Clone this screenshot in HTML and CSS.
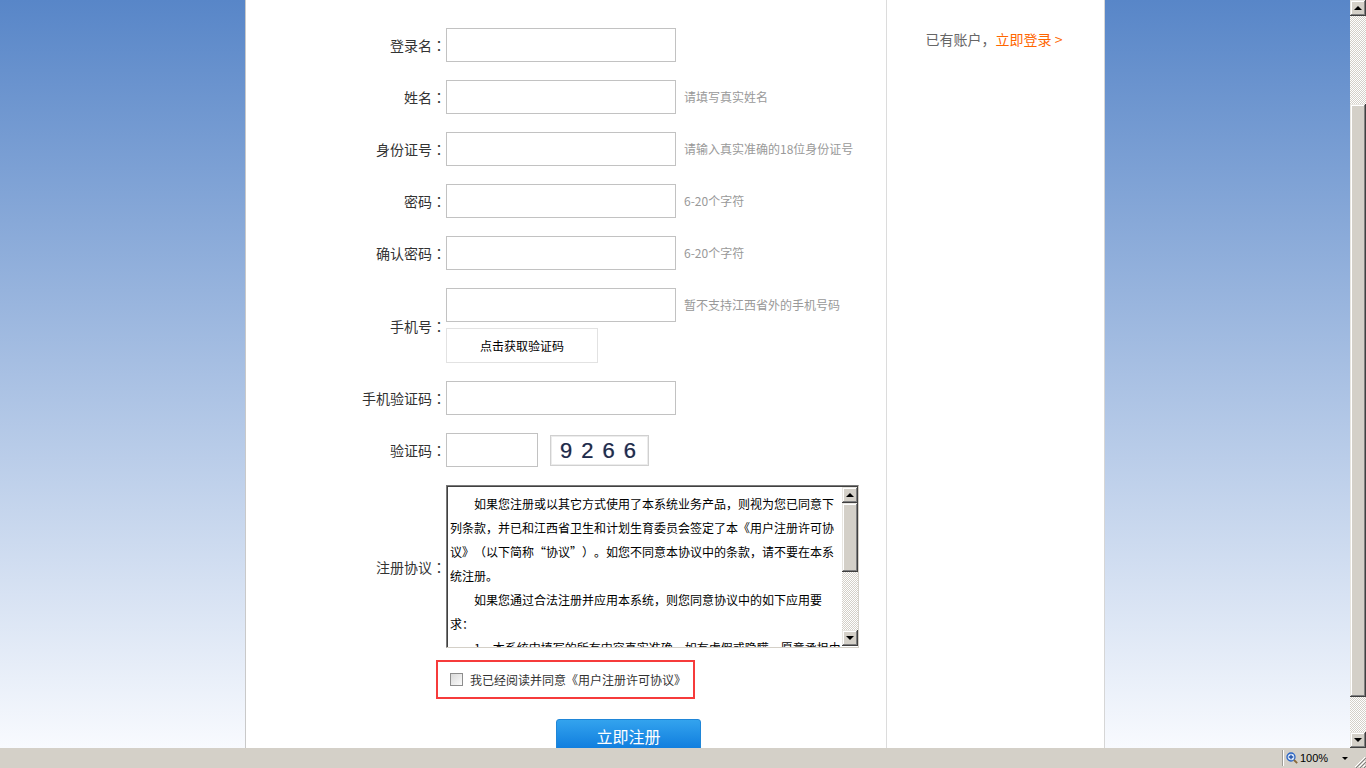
FILE: index.html
```html
<!DOCTYPE html>
<html lang="zh-CN">
<head>
<meta charset="utf-8">
<title>用户注册</title>
<link rel="stylesheet" href="styles.css">
</head>
<body>
<div class="screen">
  <div class="browser">
    <div class="viewport">
      <div class="panel">
        <div class="main">
          <form class="form">
            <div class="row">
              <label class="lbl">登录名<span class="colon" lang="zh-TW">：</span></label>
              <div class="field"><input class="ipt" type="text"></div>
            </div>
            <div class="row">
              <label class="lbl">姓名<span class="colon" lang="zh-TW">：</span></label>
              <div class="field"><input class="ipt" type="text"><span class="hint">请填写真实姓名</span></div>
            </div>
            <div class="row">
              <label class="lbl">身份证号<span class="colon" lang="zh-TW">：</span></label>
              <div class="field"><input class="ipt" type="text"><span class="hint">请输入真实准确的18位身份证号</span></div>
            </div>
            <div class="row">
              <label class="lbl">密码<span class="colon" lang="zh-TW">：</span></label>
              <div class="field"><input class="ipt" type="password"><span class="hint">6-20个字符</span></div>
            </div>
            <div class="row">
              <label class="lbl">确认密码<span class="colon" lang="zh-TW">：</span></label>
              <div class="field"><input class="ipt" type="password"><span class="hint">6-20个字符</span></div>
            </div>
            <div class="row">
              <label class="lbl">手机号<span class="colon" lang="zh-TW">：</span></label>
              <div class="field-col">
                <div class="field"><input class="ipt" type="text"><span class="hint">暂不支持江西省外的手机号码</span></div>
                <button type="button" class="sms-btn">点击获取验证码</button>
              </div>
            </div>
            <div class="row">
              <label class="lbl">手机验证码<span class="colon" lang="zh-TW">：</span></label>
              <div class="field"><input class="ipt" type="text"></div>
            </div>
            <div class="row">
              <label class="lbl">验证码<span class="colon" lang="zh-TW">：</span></label>
              <div class="field"><input class="ipt ipt-short" type="text"><span class="captcha">9266</span></div>
            </div>
            <div class="row">
              <label class="lbl">注册协议<span class="colon" lang="zh-TW">：</span></label>
              <div class="agreement">
                <div class="agreement-text">
                  <p>如果您注册或以其它方式使用了本系统业务产品，则视为您已同意下列条款，并已和江西省卫生和计划生育委员会签定了本《用户注册许可协议》（以下简称“协议”）。如您不同意本协议中的条款，请不要在本系统注册。</p>
                  <p>如果您通过合法注册并应用本系统，则您同意协议中的如下应用要求：</p>
                  <p>1、本系统中填写的所有内容真实准确，如有虚假或隐瞒，愿意承担由此产生的一切法律责任。</p>
                </div>
                <div class="sb sb-small">
                  <span class="sb-btn"><i class="tri-up"></i></span>
                  <span class="sb-thumb sb-thumb-small"></span>
                  <span class="sb-track"></span>
                  <span class="sb-btn"><i class="tri-down"></i></span>
                </div>
              </div>
            </div>
            <div class="agree-row">
              <label class="agree-box"><span class="chk"></span><span class="agree-text">我已经阅读并同意《用户注册许可协议》</span></label>
            </div>
            <div class="submit-row">
              <button type="button" class="submit">立即注册</button>
            </div>
          </form>
        </div>
        <aside class="side">
          <span class="muted">已有账户，</span><a class="login" href="#">立即登录 &gt;</a>
        </aside>
      </div>
    </div>
    <div class="sb sb-page">
      <span class="sb-btn"><i class="tri-up"></i></span>
      <span class="sb-track sb-track-top"></span>
      <span class="sb-thumb sb-thumb-page"></span>
      <span class="sb-track"></span>
      <span class="sb-btn"><i class="tri-down"></i></span>
    </div>
  </div>
  <div class="status">
    <div class="status-spacer"></div>
    <div class="zoom-pane">
      <svg class="zoom-icon" width="12" height="12" viewBox="0 0 12 12">
        <circle cx="5" cy="5" r="4" fill="#dbe9fb" stroke="#2a64c4" stroke-width="1.3"/>
        <path d="M5 2.8v4.4M2.8 5h4.4" stroke="#1f4fa8" stroke-width="1.3"/>
        <path d="M8 8l3.2 3.2" stroke="#8a6a3a" stroke-width="1.8"/>
      </svg>
      <span class="zoom-text">100%</span>
      <i class="tri-down tri-small"></i>
    </div>
    <div class="grip">
      <svg width="14" height="14" viewBox="0 0 14 14">
        <path d="M13 3L3 13M13 7L7 13M13 11L11 13" stroke="#fff" stroke-width="1"/>
        <path d="M14 4L4 14M14 8L8 14M14 12L12 14" stroke="#808080" stroke-width="1"/>
      </svg>
    </div>
  </div>
</div>
</body>
</html>
```

FILE: styles.css
```css
* { box-sizing: border-box; }
html, body { margin: 0; padding: 0; }
body {
  width: 1366px;
  height: 768px;
  overflow: hidden;
  font-family: "Noto Sans CJK SC", "Liberation Sans", sans-serif;
  color: #333;
  text-spacing-trim: space-all;
}
.screen { display: flex; flex-direction: column; width: 1366px; height: 768px; }
.browser { display: flex; height: 748px; }
.viewport {
  flex: 1;
  height: 748px;
  overflow: hidden;
  background: linear-gradient(to bottom, #5886c8 0%, #f8fafe 100%);
}
.panel {
  display: flex;
  width: 860px;
  height: 748px;
  margin-left: 245px;
  background: #fff;
  border-left: 1px solid #c9c9c9;
  border-right: 1px solid #d6d6d6;
}
.main { width: 641px; border-right: 1px solid #dcdcdc; }
.side {
  flex: 1;
  padding-top: 29px;
  padding-right: 3px;
  text-align: center;
  font-size: 14px;
  line-height: 20px;
}
.muted { color: #666; }
.login { color: #ff6600; text-decoration: none; }

.form { display: flex; flex-direction: column; gap: 18px; padding-top: 28px; margin: 0; }
.row { display: flex; align-items: center; }
.lbl {
  width: 200px;
  flex: none;
  text-align: right;
  font-size: 14px;
  line-height: 20px;
  color: #333;
}
.colon { font-family: "Noto Sans CJK TC", sans-serif; }
.field { display: flex; align-items: center; }
.field-col { display: flex; flex-direction: column; align-items: flex-start; }
.ipt {
  width: 230px;
  height: 34px;
  border: 1px solid #c2c2c2;
  margin: 0;
  padding: 0 6px;
  font-size: 14px;
  background: #fff;
  outline: none;
}
.ipt-short { width: 92px; }
.hint {
  margin-left: 8px;
  font-size: 12px;
  line-height: 16px;
  color: #999;
}
.sms-btn {
  margin-top: 6px;
  width: 152px;
  height: 35px;
  border: 1px solid #e2e2e2;
  background: #fff;
  font-family: "Noto Sans CJK SC", sans-serif;
  font-size: 12px;
  color: #000;
  padding: 0;
}
.captcha {
  margin-left: 12px;
  width: 99px;
  height: 31px;
  border: 1px solid #d0d0d0;
  box-shadow: inset 0 0 0 1px #ececec;
  font-family: "Liberation Sans", sans-serif;
  font-size: 22px;
  line-height: 29px;
  letter-spacing: 9px;
  padding-left: 9px;
  color: #1b2a4e;
  text-shadow: 0.6px 0 0 rgba(220, 140, 40, 0.45), -0.6px 0 0 rgba(40, 120, 220, 0.45);
}

.agreement {
  display: flex;
  width: 413px;
  height: 163px;
  border-style: solid;
  border-width: 1px;
  border-color: #7a7a7a #d4d0c8 #d4d0c8 #7a7a7a;
  box-shadow: inset 1px 1px 0 #404040;
  background: #fff;
}
.agreement-text {
  flex: 1;
  overflow: hidden;
  padding: 6px 0 0 3px;
  font-size: 12px;
  line-height: 24px;
  color: #000;
  text-spacing-trim: space-all;
}
.agreement-text p { margin: 0; text-indent: 2em; }

.sb { display: flex; flex-direction: column; width: 16px; flex: none; }
.sb-small { margin: 1px 0 1px 0; }
.sb-page { height: 748px; }
.sb-btn {
  height: 16px;
  flex: none;
  background: #d4d0c8;
  box-shadow: inset -1px -1px 0 #404040, inset 1px 1px 0 #e8e6e1, inset -2px -2px 0 #808080, inset 2px 2px 0 #fff;
  display: flex;
  align-items: center;
  justify-content: center;
}
.sb-thumb {
  flex: none;
  background: #d4d0c8;
  box-shadow: inset -1px -1px 0 #404040, inset 1px 1px 0 #e8e6e1, inset -2px -2px 0 #808080, inset 2px 2px 0 #fff;
}
.sb-thumb-small { height: 69px; }
.sb-thumb-page { height: 593px; }
.sb-track {
  flex: 1;
  background-color: #fff;
  background-image: repeating-conic-gradient(#d4d0c8 0 25%, #fff 0 50%);
  background-size: 2px 2px;
}
.sb-track-top { flex: none; height: 88px; }
.tri-up, .tri-down {
  display: block;
  width: 0;
  height: 0;
  border-left: 4px solid transparent;
  border-right: 4px solid transparent;
}
.tri-up { border-bottom: 4px solid #000; }
.tri-down { border-top: 4px solid #000; }
.tri-small { border-left-width: 3px; border-right-width: 3px; border-top-width: 3px; margin-left: 14px; }

.agree-row { margin-top: -6px; padding-left: 190px; }
.agree-box {
  display: flex;
  align-items: center;
  width: 259px;
  height: 39px;
  border: 2px solid #f63b3b;
  padding-left: 12px;
}
.chk {
  width: 13px;
  height: 13px;
  border: 1px solid #8d8d8d;
  background: linear-gradient(135deg, #d9d9d9, #fbfbfb);
  flex: none;
}
.agree-text {
  margin-left: 7px;
  font-size: 12px;
  line-height: 16px;
  color: #333;
}
.submit-row { margin-top: 2px; padding-left: 310px; }
.submit {
  width: 145px;
  height: 34px;
  border: 1px solid #1f86d8;
  border-radius: 3px;
  background: linear-gradient(to bottom, #33a3ee, #0c79dc);
  color: #fff;
  font-family: "Noto Sans CJK SC", sans-serif;
  font-size: 16px;
  padding: 0;
}

.status {
  display: flex;
  height: 20px;
  background: #d4d0c8;
  align-items: stretch;
}
.status-spacer { flex: 1; }
.zoom-pane {
  display: flex;
  align-items: center;
  width: 68px;
  padding-left: 3px;
  border-left: 1px solid #a09e98;
  box-shadow: inset 1px 0 0 #fff;
  margin: 2px 0;
}
.zoom-icon { flex: none; }
.zoom-text {
  margin-left: 2px;
  font-family: "Liberation Sans", sans-serif;
  font-size: 11px;
  color: #000;
}
.grip { width: 16px; display: flex; align-items: flex-end; justify-content: flex-end; }
```
